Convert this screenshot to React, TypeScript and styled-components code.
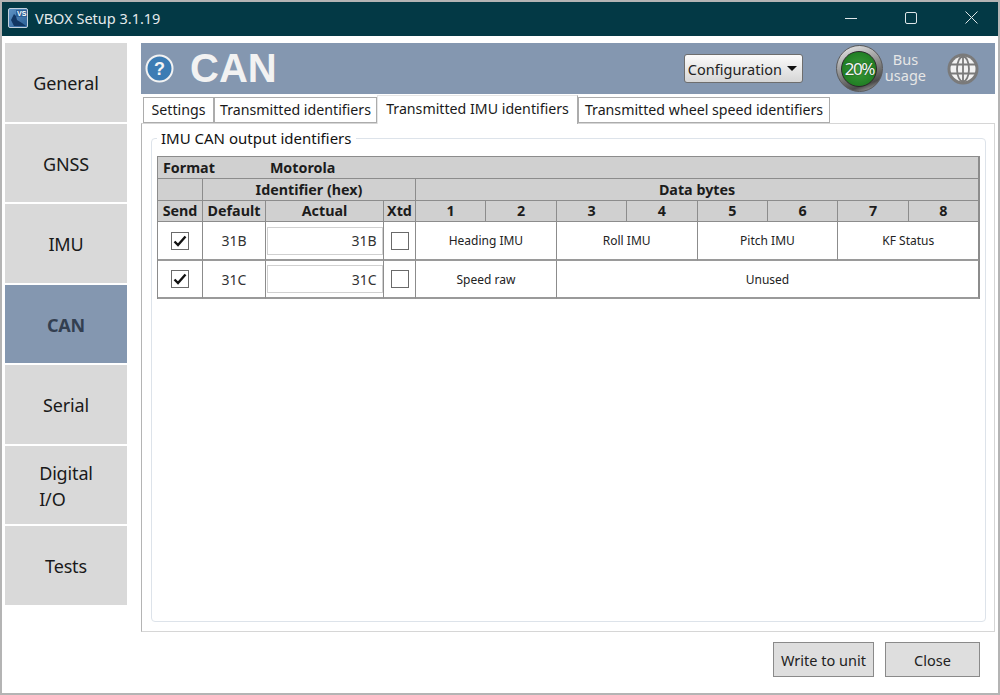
import React from "react";
import styled, {createGlobalStyle} from "styled-components";

const GlobalStyle = createGlobalStyle`
  html, body {
    margin: 0;
    padding: 0;
    background: #ffffff;
    font-family: "Noto Sans", "Open Sans", sans-serif;
    color: #1a1a1a;
  }
  * { box-sizing: border-box; }
`;

const Window = styled.div`
  width: 1000px;
  height: 695px;
  display: flex;
  flex-direction: column;
  border: 2px solid #b4b4b4;
  background: #ffffff;
  overflow: hidden;
`;
const TitleBar = styled.div`
  height: 34px;
  flex: none;
  display: flex;
  align-items: center;
  background: #033945;
  color: #e4eaec;
  padding: 0 0 3px 6px;
`;
const TitleText = styled.div`
  font-size: 14.5px;
  margin-left: 7px;
  flex: 1;
`;
const WinButton = styled.div`
  width: 60px;
  height: 30px;
  padding-left: 6px;
  display: flex;
  align-items: center;
  justify-content: center;
`;
const Body = styled.div`
  flex: 1;
  display: flex;
  min-height: 0;
  padding: 7px 3px 0 3px;
`;
const SideNav = styled.nav`
  width: 122px;
  flex: none;
  display: flex;
  flex-direction: column;
  gap: 2px;
`;
const NavItem = styled.div<{$active?: boolean}>`
  height: 78.5px;
  padding-top: 2px;
  display: flex;
  align-items: center;
  justify-content: center;
  font-size: 18px;
  letter-spacing: -0.15px;
  line-height: 26px;
  background: ${p => (p.$active ? "#8497b0" : "#d9d9d9")};
  color: ${p => (p.$active ? "#333f50" : "#1a1a1a")};
  font-weight: ${p => (p.$active ? 700 : 400)};
`;
const Main = styled.div`
  flex: 1;
  margin-left: 14px;
  display: flex;
  flex-direction: column;
  min-width: 0;
`;
const Header = styled.div`
  height: 51px;
  flex: none;
  display: flex;
  align-items: center;
  background: #8497b0;
  padding: 0 16px 0 4px;
`;
const Title = styled.div`
  font-family: "Liberation Sans", Arial, sans-serif;
  font-weight: 700;
  font-size: 40px;
  color: #f2f2f2;
  margin-left: 16px;
  flex: 1;
`;
const ConfigSelect = styled.div`
  width: 119px;
  height: 29px;
  display: flex;
  align-items: center;
  justify-content: space-between;
  padding: 0 5px 0 3px;
  font-size: 14.5px;
  color: #222222;
  border: 1px solid #6e6e6e;
  border-radius: 3px;
  background: linear-gradient(#fbfbfb, #d6d6d6);
  margin-right: 33px;
`;
const Caret = styled.span`
  width: 0;
  height: 0;
  border-left: 5px solid transparent;
  border-right: 5px solid transparent;
  border-top: 5px solid #111111;
`;
const Gauge = styled.div`
  width: 47px;
  height: 47px;
  border-radius: 50%;
  display: flex;
  align-items: center;
  justify-content: center;
  border: 1px solid #5a5a5a;
  background: linear-gradient(160deg, #f0f0f0, #8a8a8a 50%, #4a4a4a 80%, #c8c8c8);
`;
const GaugeFace = styled.div`
  width: 36px;
  height: 36px;
  border-radius: 50%;
  display: flex;
  align-items: center;
  justify-content: center;
  background: radial-gradient(circle at 50% 50%, #3d9c3d, #1f7d22 75%, #14561a);
  border: 1px solid #2a2a2a;
  color: #f4f4f4;
  font-size: 17px;
  letter-spacing: -1.4px;
  text-shadow: 0 0 2px #123d14;
`;
const BusLabel = styled.div`
  font-size: 14.5px;
  line-height: 16px;
  color: #e6e6e6;
  text-align: center;
  margin: -4px 21px 0 2px;
`;
const TabRow = styled.div`
  height: 29px;
  flex: none;
  display: flex;
  align-items: flex-end;
  padding-left: 2px;
  position: relative;
  z-index: 1;
`;
const Tab = styled.div<{$active?: boolean; $width: number}>`
  width: ${p => p.$width}px;
  height: ${p => (p.$active ? 29 : 26)}px;
  margin-bottom: ${p => (p.$active ? -1 : 0)}px;
  padding-bottom: ${p => (p.$active ? 3 : 1)}px;
  display: flex;
  align-items: center;
  justify-content: center;
  white-space: nowrap;
  font-size: 14.2px;
  background: #ffffff;
  border: 1px solid #acacac;
  border-bottom: ${p => (p.$active ? "none" : "1px solid #acacac")};
  border-top-color: ${p => (p.$active ? "#e6e6e6" : "#acacac")};
  border-left-color: ${p => (p.$active ? "#e6e6e6" : "#acacac")};
`;
const TabPanel = styled.div`
  height: 509px;
  flex: none;
  padding: 5px 9px 9px;
  border: 1px solid #b4b4b4;
  border-top-color: #d6d6d6;
  border-right-color: #d6d6d6;
  border-bottom-color: #d6d6d6;
`;
const Group = styled.fieldset`
  height: 100%;
  margin: 0;
  padding: 0 5px;
  border: 1px solid #dde3ea;
  border-radius: 4px;
`;
const GroupLegend = styled.legend`
  font-size: 15px;
  line-height: 18px;
  padding: 0 5px 0 4px;
  margin-bottom: 9px;
  color: #111111;
`;
const Table = styled.div`
  display: grid;
  grid-template-columns: 45px 63px 118px 32px repeat(8, 70.4px);
  grid-template-rows: 22px 22px 21px 39px 38px;
  border: 1px solid #8c8c8c;
  border-bottom: none;
  width: 823px;
`;
const HeadCell = styled.div<{$span?: number}>`
  grid-column: span ${p => p.$span ?? 1};
  display: flex;
  align-items: center;
  justify-content: center;
  padding-bottom: 1px;
  background: #d0d0d0;
  font-size: 14.3px;
  font-weight: 700;
  color: #1c1c1c;
  border-right: 1px solid #8c8c8c;
  border-bottom: 1px solid #8c8c8c;
`;
const FormatCell = styled(HeadCell)`
  justify-content: flex-start;
  padding-left: 5px;
`;
const FormatValue = styled.span`
  margin-left: 55px;
`;
const Cell = styled.div<{$span?: number}>`
  grid-column: span ${p => p.$span ?? 1};
  display: flex;
  align-items: center;
  justify-content: center;
  background: #ffffff;
  font-size: 14px;
  color: #333333;
  border-right: 1px solid #8c8c8c;
  border-bottom: 2px solid #9a9a9a;
`;
const ByteCell = styled(Cell)`
  font-size: 12px;
  color: #222222;
`;
const ActualInput = styled.div`
  width: 116px;
  height: 28px;
  display: flex;
  align-items: center;
  justify-content: flex-end;
  padding-right: 5px;
  border: 1px solid #d0d0d0;
  font-size: 14px;
  color: #333333;
`;
const CheckBox = styled.div`
  width: 18px;
  height: 18px;
  display: flex;
  align-items: center;
  justify-content: center;
  border: 1px solid #6a6a6a;
  background: #ffffff;
`;
const Footer = styled.div`
  flex: 1;
  display: flex;
  justify-content: flex-end;
  align-items: flex-start;
  gap: 11px;
  padding: 10px 15px 0 0;
`;
const FootButton = styled.div<{$width: number}>`
  width: ${p => p.$width}px;
  height: 35px;
  display: flex;
  align-items: center;
  justify-content: center;
  font-size: 14.5px;
  color: #222222;
  background: #dedede;
  border: 1px solid #8a8a8a;
`;

const Logo = () => (
    <svg width="20" height="20" viewBox="0 0 20 20">
        <defs>
            <linearGradient id="vs" x1="0" y1="0" x2="1" y2="1">
                <stop offset="0" stopColor="#5f93c4" />
                <stop offset="1" stopColor="#2a5f96" />
            </linearGradient>
        </defs>
        <rect x="0.5" y="0.5" width="19" height="19" rx="1.5" fill="url(#vs)" stroke="#c2d0dc" />
        <path d="M3 12 L6 6 L8 8 L9 12 L14 15 L18 18 L6 18 Z" fill="#123763" />
        <rect x="8" y="2" width="11" height="7" fill="#2c5f96" />
        <text x="9" y="8" fontSize="7" fontWeight="700" fill="#ffffff" fontFamily="Liberation Sans">VS</text>
    </svg>
);

const HelpIcon = () => (
    <svg width="29" height="29" viewBox="0 0 29 29">
        <circle cx="14.5" cy="14.5" r="13" fill="#3c7cb4" stroke="#f2f2f2" strokeWidth="2" />
        <text x="14.5" y="21" textAnchor="middle" fontSize="18" fontWeight="700" fill="#f4f4f4" fontFamily="Liberation Sans">?</text>
    </svg>
);

const GlobeIcon = () => (
    <svg width="32" height="32" viewBox="0 0 32 32">
        <circle cx="16" cy="16" r="15.5" fill="#7a7a7a" />
        <circle cx="16" cy="16" r="12.5" fill="#f2f2f2" />
        <g fill="none" stroke="#7a7a7a" strokeWidth="1.8">
            <ellipse cx="16" cy="16" rx="6" ry="12.5" />
            <path d="M16 3.5V28.5M3 11.5H29M3 20.5H29" />
        </g>
    </svg>
);

const Check = () => (
    <svg width="14" height="12" viewBox="0 0 14 12">
        <path d="M1.5 6.5 L5 10 L12.5 1.5" fill="none" stroke="#111111" strokeWidth="2.4" />
    </svg>
);

const byteHeads = ["1", "2", "3", "4", "5", "6", "7", "8"];
const navItems = ["General", "GNSS", "IMU", "CAN", "Serial", "Digital I/O", "Tests"];
const rows = [
    {id: "31B", bytes: [["Heading IMU", 2], ["Roll IMU", 2], ["Pitch IMU", 2], ["KF Status", 2]]},
    {id: "31C", bytes: [["Speed raw", 2], ["Unused", 6]]},
] as {id: string; bytes: [string, number][]}[];

const App = () => {
    return (
        <>
            <GlobalStyle />
            <Window>
                <TitleBar>
                    <Logo />
                    <TitleText>VBOX Setup 3.1.19</TitleText>
                    <WinButton>
                        <svg width="12" height="12" viewBox="0 0 12 12"><path d="M0 6.5H12" stroke="#dfe6e8" strokeWidth="1" /></svg>
                    </WinButton>
                    <WinButton>
                        <svg width="12" height="12" viewBox="0 0 12 12"><rect x="0.5" y="0.5" width="11" height="11" rx="1.5" fill="none" stroke="#dfe6e8" /></svg>
                    </WinButton>
                    <WinButton>
                        <svg width="13" height="13" viewBox="0 0 13 13"><path d="M0.5 0.5L12.5 12.5M12.5 0.5L0.5 12.5" stroke="#dfe6e8" /></svg>
                    </WinButton>
                </TitleBar>
                <Body>
                    <SideNav>
                        {navItems.map(n => (
                            <NavItem key={n} $active={n === "CAN"}>
                                {n === "Digital I/O" ? <span>Digital<br />I/O</span> : n}
                            </NavItem>
                        ))}
                    </SideNav>
                    <Main>
                        <Header>
                            <HelpIcon />
                            <Title>CAN</Title>
                            <ConfigSelect>Configuration<Caret /></ConfigSelect>
                            <Gauge><GaugeFace>20%</GaugeFace></Gauge>
                            <BusLabel>Bus<br />usage</BusLabel>
                            <GlobeIcon />
                        </Header>
                        <TabRow>
                            <Tab $width={71}>Settings</Tab>
                            <Tab $width={163}>Transmitted identifiers</Tab>
                            <Tab $width={201} $active>Transmitted IMU identifiers</Tab>
                            <Tab $width={252}>Transmitted wheel speed identifiers</Tab>
                        </TabRow>
                        <TabPanel>
                            <Group>
                                <GroupLegend>IMU CAN output identifiers</GroupLegend>
                                <Table>
                                    <FormatCell $span={12}>Format<FormatValue>Motorola</FormatValue></FormatCell>
                                    <HeadCell />
                                    <HeadCell $span={3}>Identifier (hex)</HeadCell>
                                    <HeadCell $span={8}>Data bytes</HeadCell>
                                    <HeadCell>Send</HeadCell>
                                    <HeadCell>Default</HeadCell>
                                    <HeadCell>Actual</HeadCell>
                                    <HeadCell>Xtd</HeadCell>
                                    {byteHeads.map(b => <HeadCell key={b}>{b}</HeadCell>)}
                                    {rows.map(r => (
                                        <React.Fragment key={r.id}>
                                            <Cell><CheckBox><Check /></CheckBox></Cell>
                                            <Cell>{r.id}</Cell>
                                            <Cell><ActualInput>{r.id}</ActualInput></Cell>
                                            <Cell><CheckBox /></Cell>
                                            {r.bytes.map(([label, span]) => (
                                                <ByteCell key={label} $span={span}>{label}</ByteCell>
                                            ))}
                                        </React.Fragment>
                                    ))}
                                </Table>
                            </Group>
                        </TabPanel>
                        <Footer>
                            <FootButton $width={101}>Write to unit</FootButton>
                            <FootButton $width={95}>Close</FootButton>
                        </Footer>
                    </Main>
                </Body>
            </Window>
        </>
    );
};

export default App;
